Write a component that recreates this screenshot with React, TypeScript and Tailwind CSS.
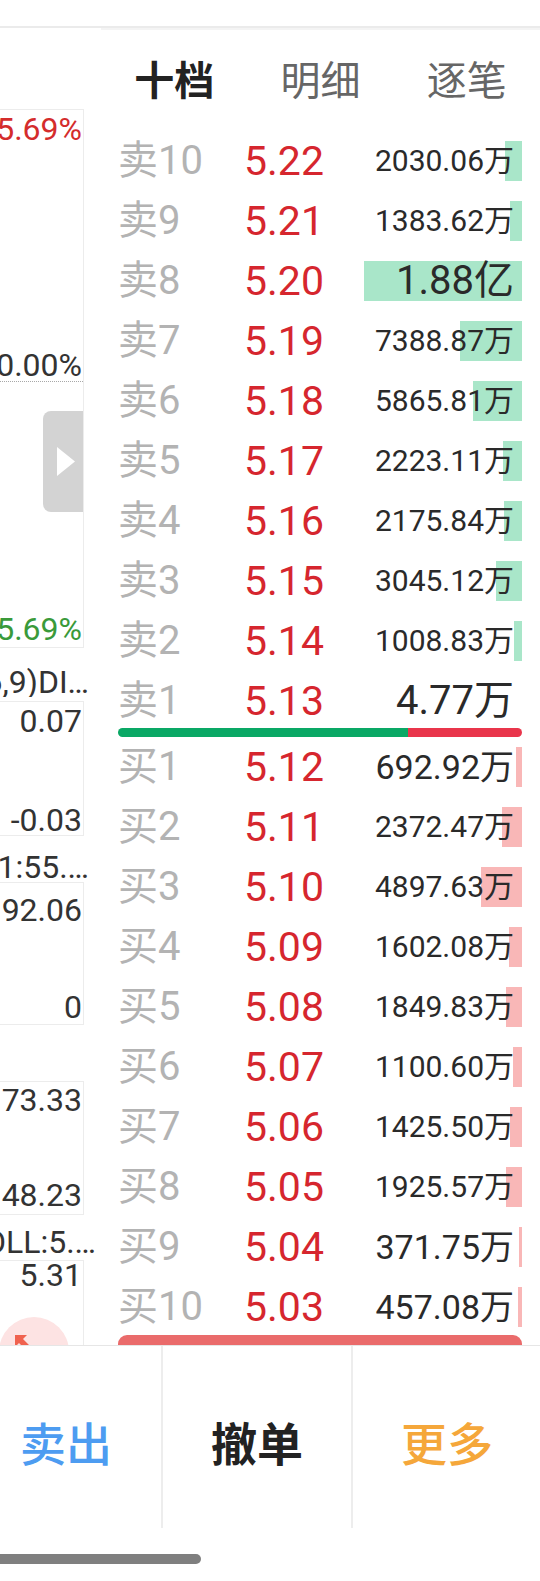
import React from 'react';

type Level = { label: string; price: string; vol: string; v: number };

const sells: Level[] = [
  { label: '卖10', price: '5.22', vol: '2030.06万', v: 2030.06 },
  { label: '卖9', price: '5.21', vol: '1383.62万', v: 1383.62 },
  { label: '卖8', price: '5.20', vol: '1.88亿', v: 18800 },
  { label: '卖7', price: '5.19', vol: '7388.87万', v: 7388.87 },
  { label: '卖6', price: '5.18', vol: '5865.81万', v: 5865.81 },
  { label: '卖5', price: '5.17', vol: '2223.11万', v: 2223.11 },
  { label: '卖4', price: '5.16', vol: '2175.84万', v: 2175.84 },
  { label: '卖3', price: '5.15', vol: '3045.12万', v: 3045.12 },
  { label: '卖2', price: '5.14', vol: '1008.83万', v: 1008.83 },
  { label: '卖1', price: '5.13', vol: '4.77万', v: 4.77 },
];

const buys: Level[] = [
  { label: '买1', price: '5.12', vol: '692.92万', v: 692.92 },
  { label: '买2', price: '5.11', vol: '2372.47万', v: 2372.47 },
  { label: '买3', price: '5.10', vol: '4897.63万', v: 4897.63 },
  { label: '买4', price: '5.09', vol: '1602.08万', v: 1602.08 },
  { label: '买5', price: '5.08', vol: '1849.83万', v: 1849.83 },
  { label: '买6', price: '5.07', vol: '1100.60万', v: 1100.6 },
  { label: '买7', price: '5.06', vol: '1425.50万', v: 1425.5 },
  { label: '买8', price: '5.05', vol: '1925.57万', v: 1925.57 },
  { label: '买9', price: '5.04', vol: '371.75万', v: 371.75 },
  { label: '买10', price: '5.03', vol: '457.08万', v: 457.08 },
];

const MAX_VOL = 18800;
const BAR_MAX = 158;

// long numbers shrink to fit the column
const volSize = (vol: string) => {
  const intPart = vol.split('.')[0];
  if (intPart.length >= 4) return 'text-[30px]';
  if (intPart.length === 3) return 'text-[34px]';
  return 'text-[40px]';
};

const Row = ({ level, side }: { level: Level; side: 'sell' | 'buy' }) => (
  <div className="relative flex items-center h-[60px]">
    <div
      className={`absolute right-0 top-[10px] h-[40px] ${side === 'sell' ? 'bg-[#a9e6c9]' : 'bg-[#f9b7b7]'}`}
      style={{ width: `${(level.v / MAX_VOL) * BAR_MAX}px` }}
    />
    <span className="relative w-[126px] text-[40px] leading-none text-[#b3b3b3]">{level.label}</span>
    <span className="relative text-[41px] leading-none text-[#d6262e]">{level.price}</span>
    <span className={`relative flex-1 text-right pr-[8px] leading-none text-[#2a2a2a] ${volSize(level.vol)}`}>
      {level.vol}
    </span>
  </div>
);

const ClipLabel = ({ text, width }: { text: string; width: string }) => (
  <div className={`flex justify-end overflow-hidden whitespace-nowrap h-[30px] leading-[30px] ${width}`}>
    <span>{text}</span>
  </div>
);

const LeftColumn = () => (
  <div className="relative w-[101px] shrink-0 overflow-hidden text-[32px] leading-none text-[#333]">
    <div className="h-[81px]" />

    <div className="w-[84px] border-y border-r border-[#ececec] flex flex-col">
      <div className="mt-[1px] h-[36px] leading-[36px] pr-[1px] text-right text-[#d42c2c] whitespace-nowrap overflow-hidden flex justify-end">
        <span>15.69%</span>
      </div>
      <div className="mt-[200px] h-[35px] leading-[36px] pr-[1px] text-right border-b border-dotted border-[#a8a8a8] whitespace-nowrap overflow-hidden flex justify-end">
        <span>10.00%</span>
      </div>
      <div className="mt-[29px] self-end w-[40px] h-[101px] rounded-l-[8px] bg-[#d3d3d3] flex items-center pl-[14px]">
        <svg width="18" height="29" viewBox="0 0 18 29">
          <polygon points="0,0 18,14.5 0,29" fill="#ffffff" />
        </svg>
      </div>
      <div className="mt-[99px] h-[36px] leading-[36px] pr-[1px] text-right text-[#3a9a3a] whitespace-nowrap overflow-hidden flex justify-end">
        <span>15.69%</span>
      </div>
    </div>

    <div className="mt-[19px]">
      <ClipLabel text="MACD(12,26,9)DI…" width="w-[89px]" />
    </div>

    <div className="mt-[4px] w-[84px] border-y border-r border-[#ececec] flex flex-col">
      <div className="mt-[4px] h-[30px] leading-[30px] pr-[1px] text-right">0.07</div>
      <div className="mt-[69px] h-[30px] leading-[30px] pr-[1px] text-right">-0.03</div>
    </div>

    <div className="mt-[16px]">
      <ClipLabel text="VOL1:55.…" width="w-[89px]" />
    </div>

    <div className="w-[84px] border-y border-r border-[#ececec] flex flex-col">
      <div className="mt-[12px] h-[30px] leading-[30px] pr-[1px] whitespace-nowrap overflow-hidden flex justify-end">
        <span>192.06</span>
      </div>
      <div className="mt-[67px] mb-[2px] h-[30px] leading-[30px] pr-[1px] text-right">0</div>
    </div>

    <div className="mt-[56px] w-[84px] border-y border-r border-[#ececec] flex flex-col">
      <div className="mt-[3px] h-[30px] leading-[30px] pr-[1px] whitespace-nowrap overflow-hidden flex justify-end">
        <span>173.33</span>
      </div>
      <div className="mt-[65px] mb-[4px] h-[30px] leading-[30px] pr-[1px] whitespace-nowrap overflow-hidden flex justify-end">
        <span>148.23</span>
      </div>
    </div>

    <div className="mt-[12px]">
      <ClipLabel text="BOLL:5.…" width="w-[96px]" />
    </div>

    <div className="mt-[3px] w-[84px] h-[100px] border-t border-r border-[#ececec]">
      <div className="mt-[1px] h-[26px] leading-[26px] pr-[1px] text-right">5.31</div>
    </div>

    <div className="absolute left-[-1px] top-[1289px] w-[70px] h-[70px] rounded-full bg-[#fde3e3]">
      <svg className="absolute left-[13px] top-[15px]" width="24" height="24" viewBox="0 0 24 24">
        <path d="M3 3 H15 L11 7 L19 15 L15 19 L7 11 L3 15 Z" fill="#f0624f" />
      </svg>
    </div>
  </div>
);

export default function App() {
  return (
    <div className="w-[540px] h-[1581px] bg-white overflow-hidden font-['Roboto','Noto_Sans_CJK_SC',sans-serif]">
      <div className="h-[26px]" />
      <div className="h-[2px] bg-[#ebebeb]" />

      <div className="flex h-[1317px] overflow-hidden">
        <LeftColumn />

        <div className="flex-1 border-t-2 border-[#f4f4f4]">
          <div className="grid grid-cols-3 h-[101px] items-center pt-[3px] text-[40px] leading-none">
            <div className="text-center font-bold text-[#222]">十档</div>
            <div className="text-center text-[#666]">明细</div>
            <div className="text-center text-[#666]">逐笔</div>
          </div>

          <div className="ml-[17px] w-[404px]">
            {sells.map((l) => (
              <Row key={l.label} level={l} side="sell" />
            ))}
            <div className="-mt-[3px] h-[9px] flex rounded-full overflow-hidden">
              <div className="w-[290px] bg-[#0aa865]" />
              <div className="flex-1 bg-[#e9354b]" />
            </div>
            {buys.map((l) => (
              <Row key={l.label} level={l} side="buy" />
            ))}
            <div className="-mt-[2px] h-[14px] rounded-t-[9px] bg-[#ea6b6b]" />
          </div>
        </div>
      </div>

      <div className="border-t border-[#e6e6e6] flex -ml-[29px] h-[183px]">
        <div className="w-[190px] shrink-0 flex items-center justify-center pt-[16px] text-[46px] leading-none font-medium text-[#4d9cf1]">
          卖出
        </div>
        <div className="w-[190px] shrink-0 border-l-2 border-[#ededed] flex items-center justify-center pt-[16px] text-[46px] leading-none font-bold text-[#222]">
          撤单
        </div>
        <div className="w-[190px] shrink-0 border-l-2 border-[#ededed] flex items-center justify-center pt-[16px] text-[46px] leading-none font-medium text-[#f5a73a]">
          更多
        </div>
      </div>

      <div className="mt-[26px] w-[201px] h-[10px] rounded-r-full bg-[#7f7f7f]" />
    </div>
  );
}
